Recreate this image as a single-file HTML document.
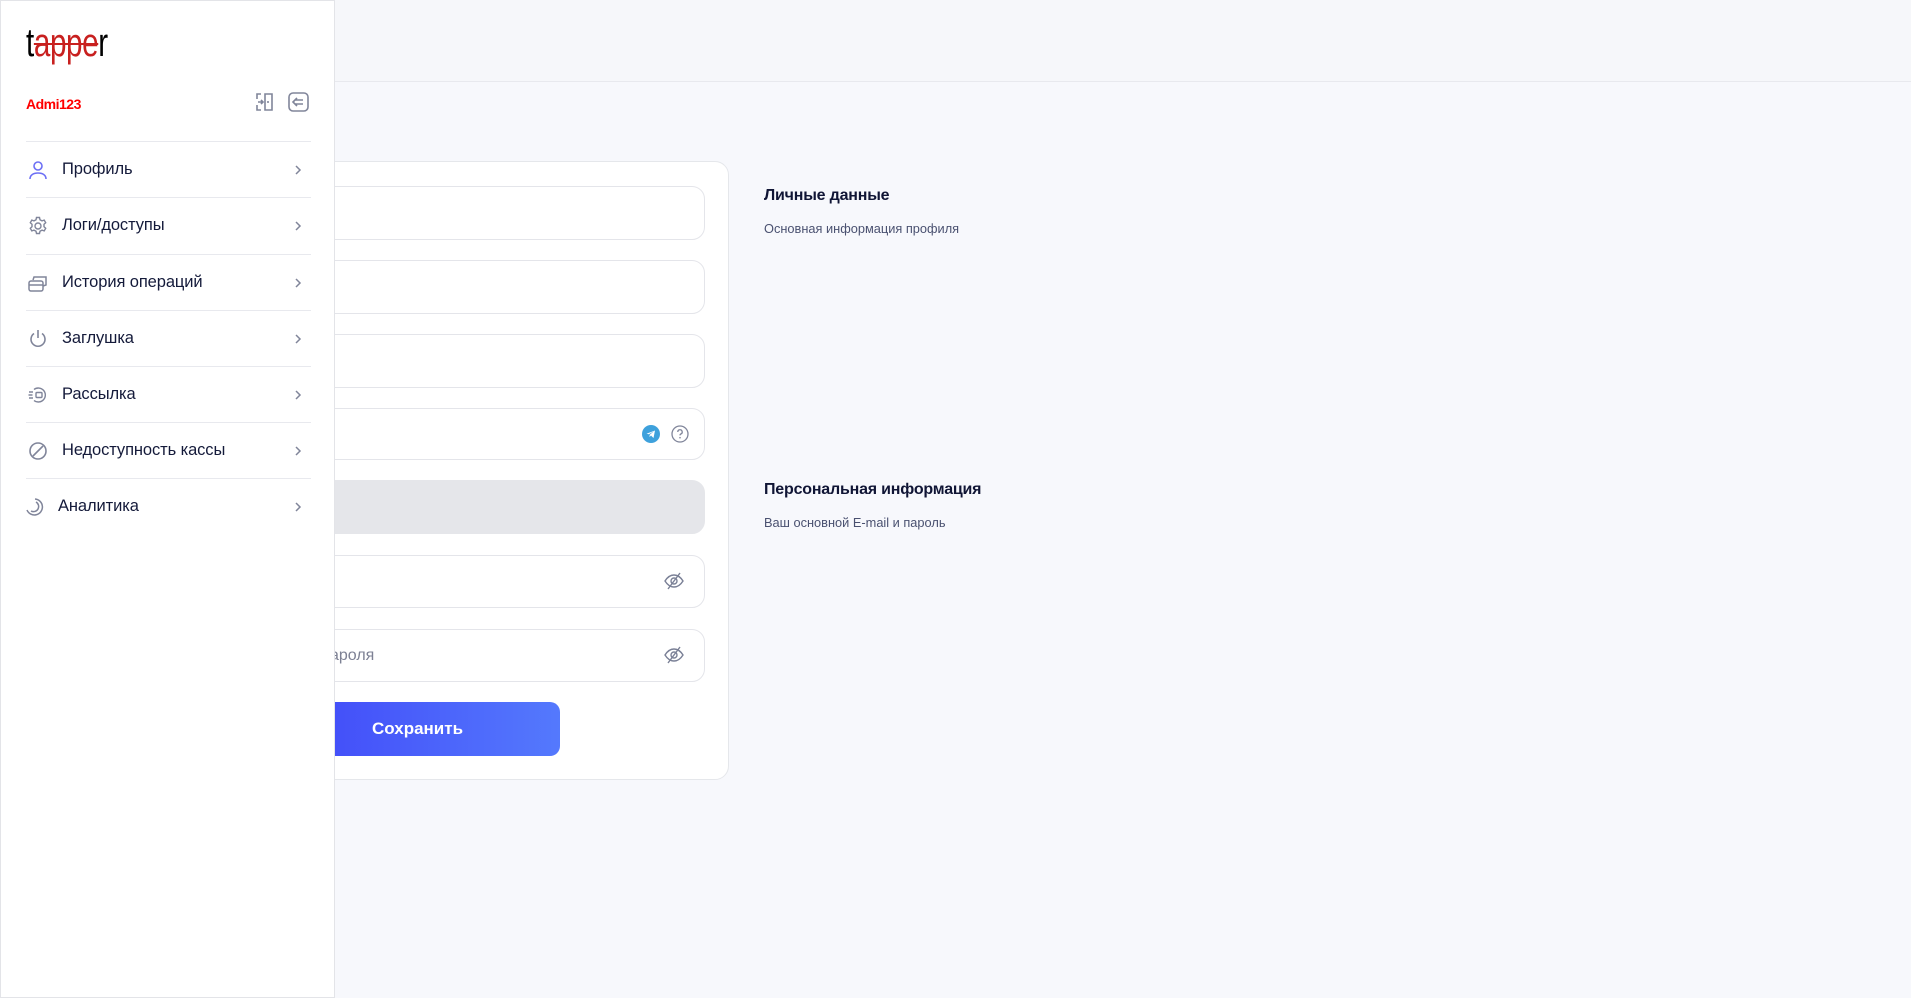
<!DOCTYPE html>
<html><head><meta charset="utf-8"><style>
*{margin:0;padding:0;box-sizing:border-box}
body{width:1911px;height:998px;background:#f7f8fc;font-family:"Liberation Sans",sans-serif;position:relative;overflow:hidden;color:#141a3a}
.hdr{position:absolute;left:334px;top:0;right:0;height:82px;border-bottom:1px solid #e8e9ee;background:#f6f7fa}
.card{position:absolute;left:280px;top:161px;width:449px;height:619px;background:#fff;border:1px solid #e5e7eb;border-radius:14px}
.inp{position:absolute;left:280px;width:425px;border:1px solid #e4e5ea;border-radius:13px;background:#fff}
.side{position:absolute;left:0;top:0;width:335px;height:998px;background:#fff;border:1px solid #e3e4e8}
.logo{position:absolute;left:25px;top:20px;font-family:"Liberation Sans Narrow","Liberation Sans",sans-serif;font-size:40px;letter-spacing:-0.5px;transform:scaleX(.74);transform-origin:left;color:#000}
.item{position:absolute;left:25px;width:285px;height:56px;border-top:1px solid #e8e9ee;display:flex;align-items:center}
.item span{position:absolute;left:36px;font-size:16.5px;color:#141a3a;letter-spacing:-0.1px}
.item svg.ic{position:absolute;left:2px}
.chev{position:absolute;right:9px}
h3{position:absolute;left:764px;font-size:16px;font-weight:bold;color:#101535;letter-spacing:-0.2px}
p.s{position:absolute;left:764px;font-size:12.8px;color:#4a5170}
</style></head><body>
<div class="hdr"></div>
<div class="card"></div>
<div class="inp" style="top:186px;height:54px"></div>
<div class="inp" style="top:260px;height:54px"></div>
<div class="inp" style="top:334px;height:54px"></div>
<div class="inp" style="top:408px;height:52px">
<svg style="position:absolute;left:361px;top:16px" width="18" height="18" viewBox="0 0 18 18"><circle cx="9" cy="9" r="9" fill="#3ea1dc"/><path d="M4.5 8.8 13 5.5 11.5 13 9 10.5 7.5 12 7.7 9.7 12 6.3 6.8 9.3Z" fill="#fff"/></svg>
<svg style="position:absolute;left:390px;top:16px" width="18" height="18" viewBox="0 0 18 18"><circle cx="9" cy="9" r="8" fill="none" stroke="#80859a" stroke-width="1.3"/><path d="M6.8 7a2.2 2.2 0 1 1 3 2c-.6.3-.8.7-.8 1.4" fill="none" stroke="#80859a" stroke-width="1.3"/><circle cx="9" cy="12.7" r=".8" fill="#80859a"/></svg>
</div>
<div class="inp" style="top:480px;height:54px;background:#e5e6ea;border-color:#e5e6ea"></div>
<div class="inp" style="top:555px;height:53px"><svg style="position:absolute;left:382px;top:15px" width="22" height="20" viewBox="0 0 22 20"><path d="M2 10c2.5-4 5.5-6 9-6s6.5 2 9 6c-2.5 4-5.5 6-9 6s-6.5-2-9-6z" fill="none" stroke="#7a8096" stroke-width="1.4"/><circle cx="11" cy="10" r="3" fill="none" stroke="#7a8096" stroke-width="1.4"/><path d="M17 2 5 18" stroke="#7a8096" stroke-width="1.4"/></svg></div>
<div class="inp" style="top:629px;height:53px"><span style="position:absolute;left:49px;top:17px;font-size:16px;color:#7d8194">ароля</span><svg style="position:absolute;left:382px;top:15px" width="22" height="20" viewBox="0 0 22 20"><path d="M2 10c2.5-4 5.5-6 9-6s6.5 2 9 6c-2.5 4-5.5 6-9 6s-6.5-2-9-6z" fill="none" stroke="#7a8096" stroke-width="1.4"/><circle cx="11" cy="10" r="3" fill="none" stroke="#7a8096" stroke-width="1.4"/><path d="M17 2 5 18" stroke="#7a8096" stroke-width="1.4"/></svg></div>
<div style="position:absolute;left:280px;top:702px;width:280px;height:54px;border-radius:10px;background:linear-gradient(90deg,#4047f8,#5479fd);color:#fff;font-weight:bold;font-size:17px;line-height:54px;padding-left:92px">Сохранить</div>
<h3 style="top:187px">Личные данные</h3>
<p class="s" style="top:221px">Основная информация профиля</p>
<h3 style="top:481px">Персональная информация</h3>
<p class="s" style="top:515px">Ваш основной E-mail и пароль</p>

<div class="side">
<div class="logo">t<span style="color:#c8201f;text-decoration:line-through;text-decoration-thickness:2px;text-decoration-color:#c8201f">appe</span>r</div>
<div style="position:absolute;left:25px;top:95px;font-size:14px;font-weight:bold;color:#f00;letter-spacing:-.5px">Admi123</div>
<svg style="position:absolute;left:254px;top:91px" width="20" height="20" viewBox="0 0 20 20" fill="none" stroke="#80859a" stroke-width="1.6"><path d="M6 2H2v5M2 13v5h4M10 2h7v16h-7zM3 10h5M6 8l2 2-2 2"/><path d="M13 9v2"/></svg>
<svg style="position:absolute;left:287px;top:91px" width="21" height="20" viewBox="0 0 21 20" fill="none" stroke="#80859a" stroke-width="1.6"><rect x="1" y="1" width="19" height="18" rx="4"/><path d="M9 6l-4 4 4 4M7 8h8M7 12h8"/></svg>
<div class="item" style="top:140px"><svg class="ic" width="20" height="20" viewBox="0 0 20 20" fill="none" stroke="#6c6ff5" stroke-width="1.6"><circle cx="10" cy="6" r="4"/><path d="M2 19c0-4 3.5-6 8-6s8 2 8 6"/></svg><span>Профиль</span><svg class="chev" width="8" height="12" viewBox="0 0 8 12"><path d="M2 2l4 4-4 4" fill="none" stroke="#80859a" stroke-width="1.5"/></svg></div>
<div class="item" style="top:196px"><svg class="ic" width="20" height="20" viewBox="0 0 20 20" fill="none" stroke="#80859a" stroke-width="1.4"><circle cx="10" cy="10" r="3"/><path d="M8.5 1.5h3l.5 2.3 2 1.1 2.2-.8 1.5 2.6-1.7 1.6v2.4l1.7 1.6-1.5 2.6-2.2-.8-2 1.1-.5 2.3h-3l-.5-2.3-2-1.1-2.2.8-1.5-2.6 1.7-1.6V8.3L2.3 6.7l1.5-2.6 2.2.8 2-1.1z"/></svg><span>Логи/доступы</span><svg class="chev" width="8" height="12" viewBox="0 0 8 12"><path d="M2 2l4 4-4 4" fill="none" stroke="#80859a" stroke-width="1.5"/></svg></div>
<div class="item" style="top:253px"><svg class="ic" width="20" height="20" viewBox="0 0 20 20" fill="none" stroke="#80859a" stroke-width="1.5"><rect x="1" y="8" width="14" height="10" rx="2"/><path d="M1 12h14M5 7l1-3 12 0v8l-3 1"/></svg><span>История операций</span><svg class="chev" width="8" height="12" viewBox="0 0 8 12"><path d="M2 2l4 4-4 4" fill="none" stroke="#80859a" stroke-width="1.5"/></svg></div>
<div class="item" style="top:309px"><svg class="ic" width="20" height="20" viewBox="0 0 20 20" fill="none" stroke="#80859a" stroke-width="1.6"><path d="M6 4.5a7 7 0 1 0 8 0M10 1v8"/></svg><span>Заглушка</span><svg class="chev" width="8" height="12" viewBox="0 0 8 12"><path d="M2 2l4 4-4 4" fill="none" stroke="#80859a" stroke-width="1.5"/></svg></div>
<div class="item" style="top:365px"><svg class="ic" width="20" height="20" viewBox="0 0 20 20" fill="none" stroke="#80859a" stroke-width="1.4"><path d="M6 4.5a7 7 0 1 1 0 11M1 7h4M0.5 10h4M1 13h4"/><rect x="8" y="7.5" width="6" height="5" rx="1"/></svg><span>Рассылка</span><svg class="chev" width="8" height="12" viewBox="0 0 8 12"><path d="M2 2l4 4-4 4" fill="none" stroke="#80859a" stroke-width="1.5"/></svg></div>
<div class="item" style="top:421px"><svg class="ic" width="20" height="20" viewBox="0 0 20 20" fill="none" stroke="#80859a" stroke-width="1.6"><circle cx="10" cy="10" r="8"/><path d="M15 5 5 15"/></svg><span>Недоступность кассы</span><svg class="chev" width="8" height="12" viewBox="0 0 8 12"><path d="M2 2l4 4-4 4" fill="none" stroke="#80859a" stroke-width="1.5"/></svg></div>
<div class="item" style="top:477px"><svg class="ic" style="left:0" width="20" height="20" viewBox="0 0 20 20" fill="none" stroke="#80859a" stroke-width="1.5"><path d="M9 2a8 8 0 1 1-8 11"/><path d="M10 5a5 5 0 0 1-5 9"/></svg><span style="left:32px">Аналитика</span><svg class="chev" width="8" height="12" viewBox="0 0 8 12"><path d="M2 2l4 4-4 4" fill="none" stroke="#80859a" stroke-width="1.5"/></svg></div>
</div>
</body></html>
